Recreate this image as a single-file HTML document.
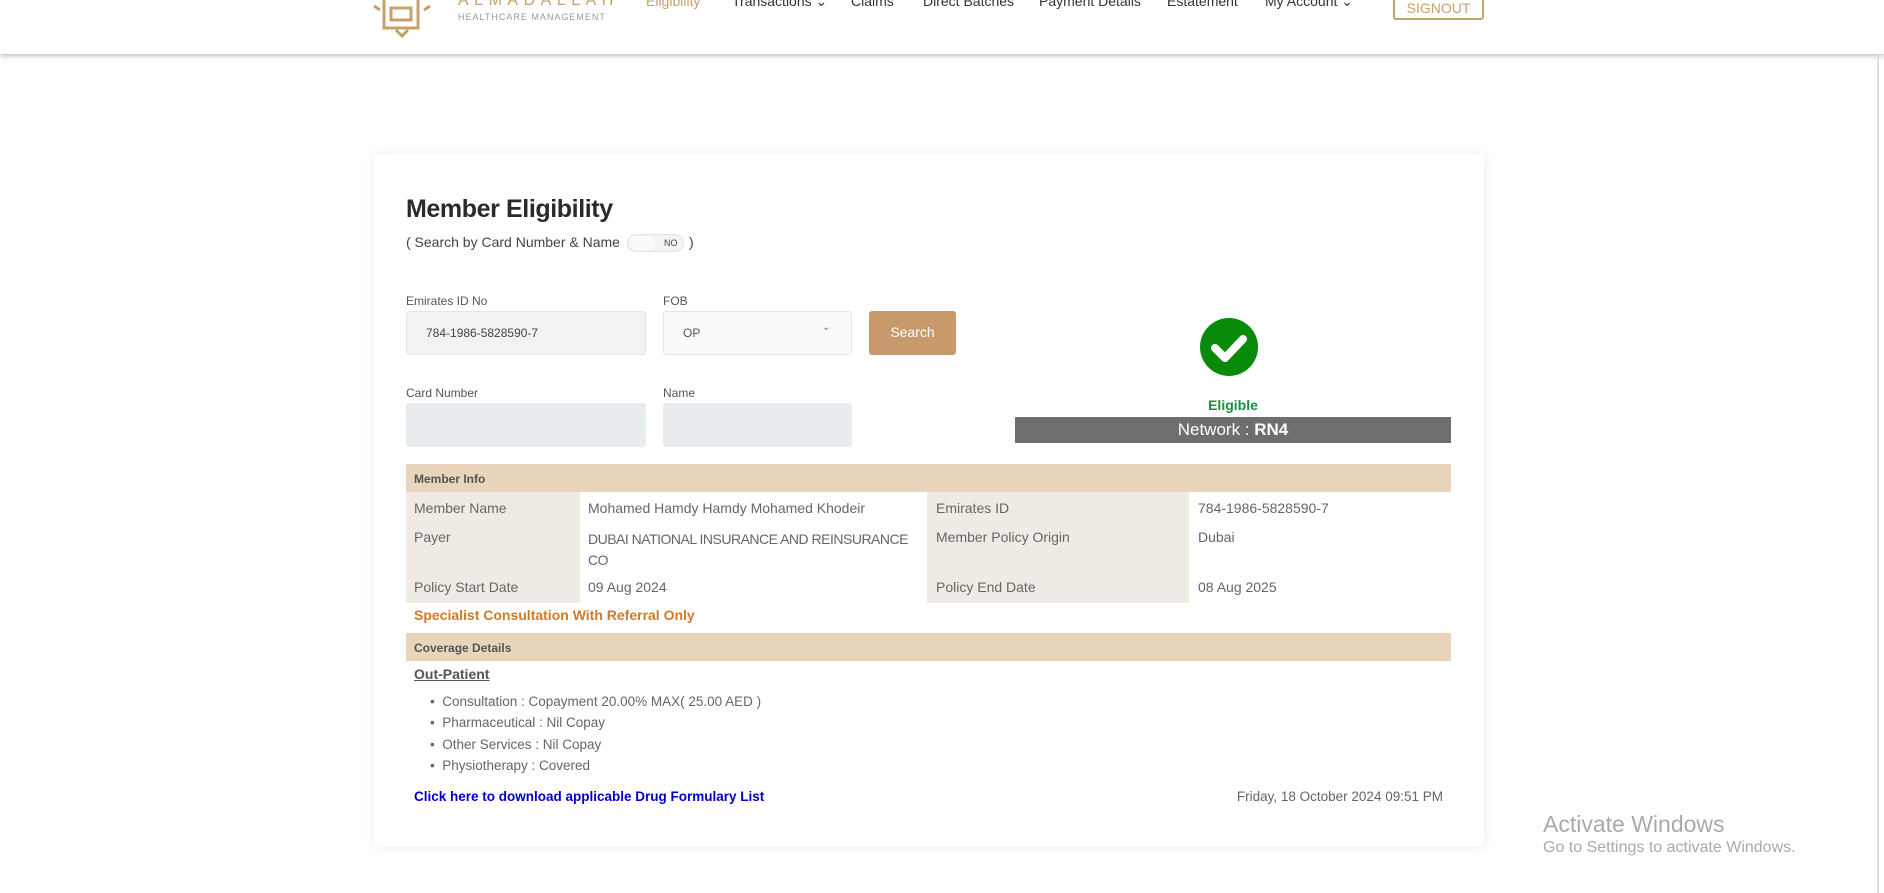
<!DOCTYPE html>
<html><head><meta charset="utf-8"><style>
*{margin:0;padding:0;box-sizing:border-box}
body{width:1884px;height:893px;background:#fff;font-family:"Liberation Sans",Arial,sans-serif;position:relative;overflow:hidden;color:#555}
.a{position:absolute;white-space:nowrap}
.hdr{position:absolute;left:0;top:0;width:1884px;height:54px;background:#fff;box-shadow:0 2px 5px rgba(0,0,0,.25)}
.nav{font-size:14px;color:#333;top:-7px}
.card{position:absolute;left:374px;top:154px;width:1110px;height:693px;background:#fff;box-shadow:0 0 12px rgba(0,0,0,.07)}
.lbl{font-size:12px;color:#555}
.inp{position:absolute;border-radius:3px}
.row{font-size:14px;color:#666}
.bg{position:absolute;background:#efebe4}
.sec{position:absolute;left:406px;width:1045px;height:28px;background:#e8d5bb;font-size:12px;font-weight:bold;color:#555;padding:8px 8px}
</style></head><body>
<div class="hdr"></div>
<svg class="a" style="left:372px;top:0" width="60" height="38" viewBox="0 0 60 38">
<g fill="none" stroke="#c8a06a" stroke-width="3"><rect x="12" y="-6" width="34" height="34"/><path d="M19 8h20v12H19zM2 6l6 4M58 6l-6 4M24 30l6 6 6-6"/></g></svg>
<div class="a" style="left:458px;top:-8px;font-size:16px;letter-spacing:5.5px;color:#c8a06a">ALMADALLAH</div>
<div class="a" style="left:458px;top:12px;font-size:9px;letter-spacing:1px;color:#999">HEALTHCARE MANAGEMENT</div>
<div class="a nav" style="left:646px;color:#c8a06a">Eligibility</div>
<div class="a nav" style="left:732px">Transactions ⌄</div>
<div class="a nav" style="left:851px">Claims</div>
<div class="a nav" style="left:923px">Direct Batches</div>
<div class="a nav" style="left:1039px">Payment Details</div>
<div class="a nav" style="left:1167px">Estatement</div>
<div class="a nav" style="left:1265px">My Account ⌄</div>
<div class="a" style="left:1393px;top:-10px;width:91px;height:30px;border:2px solid #c8a06a;border-radius:3px;color:#c8a06a;font-size:14px;text-align:center;padding-top:8px">SIGNOUT</div>
<div class="a" style="left:1877px;top:54px;width:2px;height:839px;background:#ddd"></div>

<div class="card"></div>
<div class="a" style="left:406px;top:195px;font-size:25px;letter-spacing:-0.4px;font-weight:bold;color:#2a2a2a">Member Eligibility</div>
<div class="a" style="left:406px;top:234px;font-size:14px;color:#444">( Search by Card Number &amp; Name</div>
<div class="a" style="left:627px;top:234px;width:57px;height:18px;border-radius:9px;background:#f3f3f3;border:1px solid #e3e3e3"><div style="position:absolute;left:1px;top:1px;width:26px;height:14px;border-radius:7px;background:#fafafa"></div><span style="position:absolute;left:36px;top:3px;font-size:9px;color:#444">NO</span></div>
<div class="a" style="left:689px;top:234px;font-size:14px;color:#444">)</div>

<div class="a lbl" style="left:406px;top:294px">Emirates ID No</div>
<div class="a lbl" style="left:663px;top:294px">FOB</div>
<div class="inp" style="left:406px;top:311px;width:240px;height:44px;background:#f2f2f2;border:1px solid #e6e6e6"></div>
<div class="a" style="left:426px;top:326px;font-size:12px;color:#444">784-1986-5828590-7</div>
<div class="inp" style="left:663px;top:311px;width:189px;height:44px;background:#fafafa;border:1px solid #e6e6e6"></div>
<div class="a" style="left:683px;top:326px;font-size:12px;color:#555">OP</div>
<div class="a" style="left:822px;top:322px;font-size:10px;color:#777">⌄</div>
<div class="inp" style="left:869px;top:311px;width:87px;height:44px;background:#c8996a;color:#fff;font-size:14px;text-align:center;padding-top:13px">Search</div>
<div class="a lbl" style="left:406px;top:386px">Card Number</div>
<div class="a lbl" style="left:663px;top:386px">Name</div>
<div class="inp" style="left:406px;top:403px;width:240px;height:44px;background:#e9ecef"></div>
<div class="inp" style="left:663px;top:403px;width:189px;height:44px;background:#e9ecef"></div>

<svg class="a" style="left:1199px;top:317px" width="60" height="60" viewBox="0 0 60 60"><circle cx="30" cy="30" r="29" fill="#0a8a0a"/><path d="M16 31l10 10 18-19" fill="none" stroke="#fff" stroke-width="8" stroke-linecap="round" stroke-linejoin="round"/></svg>
<div class="a" style="left:1015px;width:436px;top:397px;text-align:center;font-size:14px;font-weight:bold;color:#1a9040">Eligible</div>
<div class="a" style="left:1015px;top:417px;width:436px;height:26px;background:#6e6e6e;color:#fff;font-size:17px;text-align:center;padding-top:3px">Network : <b>RN4</b></div>

<div class="sec" style="top:464px">Member Info</div>
<div class="bg" style="left:406px;top:492px;width:174px;height:111px"></div>
<div class="bg" style="left:927px;top:492px;width:262px;height:111px"></div>
<div class="a row" style="left:414px;top:500px">Member Name</div>
<div class="a row" style="left:588px;top:500px">Mohamed Hamdy Hamdy Mohamed Khodeir</div>
<div class="a row" style="left:936px;top:500px">Emirates ID</div>
<div class="a row" style="left:1198px;top:500px">784-1986-5828590-7</div>
<div class="a row" style="left:414px;top:529px">Payer</div>
<div class="a row" style="left:588px;top:529px;line-height:21px;letter-spacing:-0.5px">DUBAI NATIONAL INSURANCE AND REINSURANCE<br>CO</div>
<div class="a row" style="left:936px;top:529px">Member Policy Origin</div>
<div class="a row" style="left:1198px;top:529px">Dubai</div>
<div class="a row" style="left:414px;top:579px">Policy Start Date</div>
<div class="a row" style="left:588px;top:579px">09 Aug 2024</div>
<div class="a row" style="left:936px;top:579px">Policy End Date</div>
<div class="a row" style="left:1198px;top:579px">08 Aug 2025</div>
<div class="a" style="left:414px;top:607px;font-size:14px;font-weight:bold;color:#d07a2a">Specialist Consultation With Referral Only</div>

<div class="sec" style="top:633px">Coverage Details</div>
<div class="a" style="left:414px;top:666px;font-size:14px;font-weight:bold;color:#555;text-decoration:underline">Out-Patient</div>
<div class="a row" style="left:430px;top:691px;font-size:13.5px;line-height:21.3px">• &nbsp;Consultation : Copayment 20.00% MAX( 25.00 AED )<br>• &nbsp;Pharmaceutical : Nil Copay<br>• &nbsp;Other Services : Nil Copay<br>• &nbsp;Physiotherapy : Covered</div>
<div class="a" style="left:414px;top:789px;font-size:13.5px;font-weight:bold;color:#0000cc">Click here to download applicable Drug Formulary List</div>
<div class="a" style="right:441px;top:789px;font-size:13.5px;color:#666">Friday, 18 October 2024 09:51 PM</div>

<div class="a" style="left:1543px;top:811px;font-size:23px;color:#aaa">Activate Windows</div>
<div class="a" style="left:1543px;top:839px;font-size:16px;color:#aaa">Go to Settings to activate Windows.</div>
</body></html>
